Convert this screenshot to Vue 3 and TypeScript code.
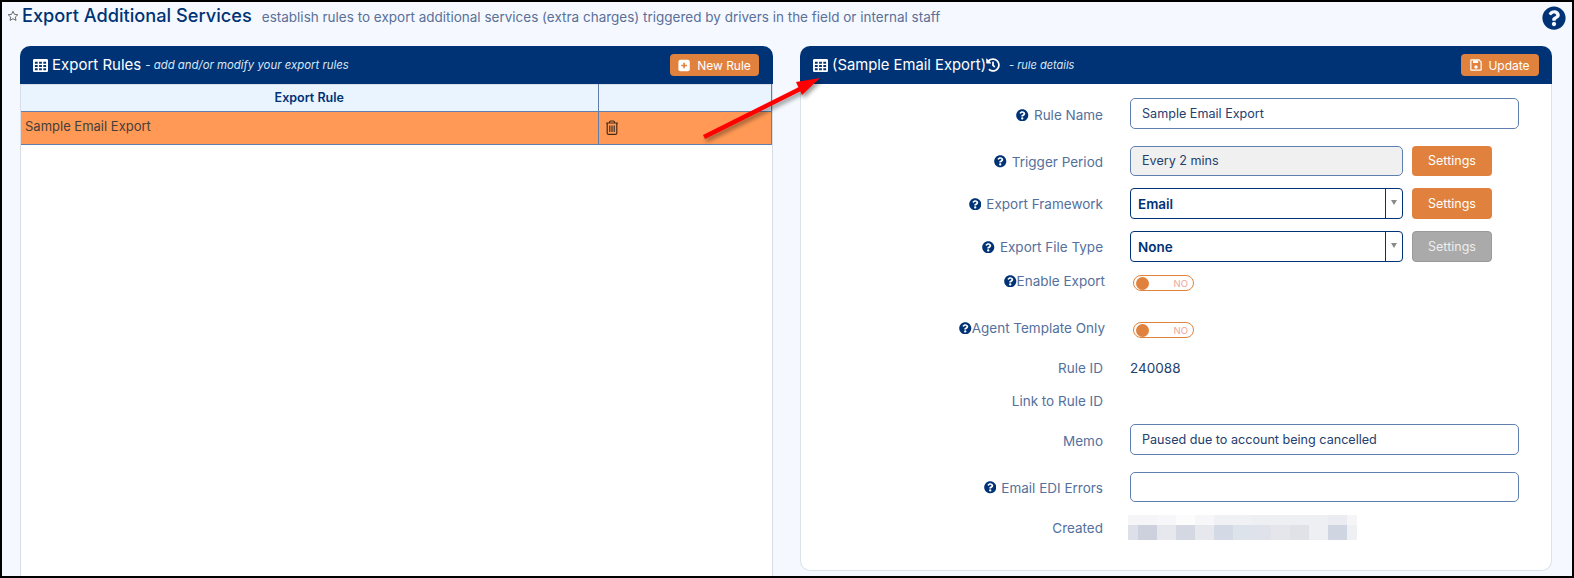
<script setup lang="ts">
const questionPath =
  "M504 256c0 136.997-111.043 248-248 248S8 392.997 8 256C8 119.083 119.043 8 256 8s248 111.083 248 248zM262.655 90c-54.497 0-89.255 22.957-116.549 63.758-3.536 5.286-2.353 12.415 2.715 16.258l34.699 26.31c5.205 3.947 12.621 3.008 16.665-2.122 17.864-22.658 30.113-35.797 57.303-35.797 20.429 0 45.698 13.148 45.698 32.958 0 14.976-12.363 22.667-32.534 33.976C247.128 238.528 216 254.941 216 296v4c0 6.627 5.373 12 12 12h56c6.627 0 12-5.373 12-12v-1.333c0-28.462 83.186-29.647 83.186-106.667 0-58.002-60.165-102-116.531-102zM256 338c-25.365 0-46 20.635-46 46 0 25.364 20.635 46 46 46s46-20.636 46-46c0-25.365-20.635-46-46-46z";
const tablePath =
  "M464 32H48C21.49 32 0 53.49 0 80v352c0 26.51 21.49 48 48 48h416c26.51 0 48-21.49 48-48V80c0-26.51-21.49-48-48-48zM160 416H64v-64h96v64zm0-112H64v-64h96v64zm0-112H64v-64h96v64zm144 224h-96v-64h96v64zm0-112h-96v-64h96v64zm0-112h-96v-64h96v64zm144 224h-96v-64h96v64zm0-112h-96v-64h96v64zm0-112h-96v-64h96v64z";
const historyPath =
  "M504 255.531c.253 136.64-111.18 248.372-247.82 248.468-59.015.042-113.223-20.53-155.822-54.911-11.077-8.94-11.905-25.541-1.839-35.607l11.267-11.267c8.609-8.609 22.353-9.551 31.891-1.984C173.062 425.135 212.781 440 256 440c101.705 0 184-82.311 184-184 0-101.705-82.311-184-184-184-48.814 0-93.149 18.969-126.068 49.932l50.754 50.754c10.08 10.08 2.941 27.314-11.313 27.314H24c-8.837 0-16-7.163-16-16V38.627c0-14.254 17.234-21.393 27.314-11.314l49.372 49.372C129.209 34.136 189.552 8 256 8c136.81 0 247.747 110.78 248 247.531zm-180.912 78.784l9.823-12.63c8.138-10.463 6.253-25.542-4.21-33.679L288 256.349V152c0-13.255-10.745-24-24-24h-16c-13.255 0-24 10.745-24 24v135.651l65.409 50.874c10.463 8.137 25.541 6.253 33.679-4.21z";

// the "Created" value is pixelated in the source, two rows of blocks
interface BlurCell {
  width: number;
  top: string;
  bottom: string;
}

const blurWidths = [10, 19, 19, 19, 19, 19, 19, 19, 19, 19, 19, 19, 10];
const blurTop = [
  "#f5f5f8", "#f5f5f8", "#f7f7fa", "#fcfcfd", "#f7f7fa", "#f0f1f5", "#f0f1f5",
  "#eeeff3", "#eeeff3", "#eeeff3", "#eeeff3", "#eaecf1", "#f5f5f8",
];
const blurBottom = [
  "#dde0e8", "#cdd1dd", "#e6e8ee", "#d3d8e3", "#e6e8ee", "#d3dae5", "#dde3eb",
  "#dfe2ea", "#e4e6ec", "#e0e2e8", "#edeff3", "#d0d6e1", "#eff0f3",
];
const blurCells: BlurCell[] = blurWidths.map((width, i) => ({
  width,
  top: blurTop[i],
  bottom: blurBottom[i],
}));
</script>

<template>
  <div class="page">
    <header class="page-head">
      <svg class="star" viewBox="0 0 24 24">
        <path d="M12 2.5l2.9 6.2 6.7.8-5 4.6 1.4 6.7L12 17.4l-6 3.4 1.4-6.7-5-4.6 6.7-.8z" />
      </svg>
      <h1 class="page-title">Export Additional Services</h1>
      <span class="page-sub">establish rules to export additional services (extra charges) triggered by drivers in the field or internal staff</span>
      <svg class="page-help" viewBox="0 0 512 512">
        <path :d="questionPath" />
      </svg>
    </header>

    <div class="panels">
      <section class="panel panel--rules">
        <div class="panel-head">
          <svg class="head-icon" viewBox="0 0 512 512"><path :d="tablePath" /></svg>
          <span class="panel-title">Export Rules</span>
          <span class="panel-sub">- add and/or modify your export rules</span>
          <button class="head-btn head-btn--new">
            <svg class="btn-icon" viewBox="0 0 16 16">
              <rect x="0.5" y="1" width="14" height="14" rx="2.5" fill="#fff" />
              <path d="M7.5 4.5v7M4 8h7" stroke="#e0823d" stroke-width="2" />
            </svg>
            New Rule
          </button>
        </div>
        <table class="rules">
          <thead>
            <tr>
              <th class="col-name">Export Rule</th>
              <th class="col-action"></th>
            </tr>
          </thead>
          <tbody>
            <tr class="selected">
              <td class="cell-name">Sample Email Export</td>
              <td class="cell-action">
                <svg class="trash" viewBox="0 0 14 15">
                  <path d="M1 3h12M4.5 3V2.2c0-.7.5-1.2 1.2-1.2h2.6c.7 0 1.2.5 1.2 1.2V3M2.2 3v10.2c0 .7.5 1.2 1.2 1.2h7.2c.7 0 1.2-.5 1.2-1.2V3" fill="none" stroke="#4a2a14" stroke-width="1.2" />
                  <path d="M4.8 5.5v6.5M7 5.5v6.5M9.2 5.5v6.5" stroke="#3b3328" stroke-width="1.2" />
                </svg>
              </td>
            </tr>
          </tbody>
        </table>
      </section>

      <section class="panel panel--details">
        <div class="panel-head">
          <svg class="head-icon" viewBox="0 0 512 512"><path :d="tablePath" /></svg>
          <span class="panel-title panel-title--details">(Sample Email Export)</span>
          <svg class="history" viewBox="0 0 512 512"><path :d="historyPath" /></svg>
          <span class="panel-sub panel-sub--details">- rule details</span>
          <button class="head-btn head-btn--update">
            <svg class="btn-icon btn-icon--save" viewBox="0 0 14 14">
              <path d="M1.5 1h9l2.5 2.5v8.8c0 .4-.3.7-.7.7H1.7c-.4 0-.7-.3-.7-.7V1.5c0-.3.2-.5.5-.5z" fill="none" stroke="#fff" stroke-width="1.4" />
              <path d="M3.5 1.5h6v3.2h-6z" fill="#fff" />
              <circle cx="7" cy="9.3" r="2" fill="#fff" />
            </svg>
            Update
          </button>
        </div>

        <div class="form">
          <div class="row row--name">
            <label class="label label--low">
              <svg class="help help--spaced" viewBox="0 0 512 512"><path :d="questionPath" /></svg>
              Rule Name
            </label>
            <div class="input input--full">Sample Email Export</div>
          </div>

          <div class="row row--trigger">
            <label class="label">
              <svg class="help help--spaced" viewBox="0 0 512 512"><path :d="questionPath" /></svg>
              Trigger Period
            </label>
            <div class="input input--short input--readonly">Every 2 mins</div>
            <button class="settings">Settings</button>
          </div>

          <div class="row row--select">
            <label class="label">
              <svg class="help help--spaced" viewBox="0 0 512 512"><path :d="questionPath" /></svg>
              Export Framework
            </label>
            <div class="select">
              <span class="select-value">Email</span>
              <span class="select-arrow"></span>
            </div>
            <button class="settings">Settings</button>
          </div>

          <div class="row row--select row--file">
            <label class="label">
              <svg class="help help--spaced" viewBox="0 0 512 512"><path :d="questionPath" /></svg>
              Export File Type
            </label>
            <div class="select">
              <span class="select-value">None</span>
              <span class="select-arrow"></span>
            </div>
            <button class="settings settings--disabled">Settings</button>
          </div>

          <div class="row row--toggle row--enable">
            <label class="label label--toggle">
              <svg class="help" viewBox="0 0 512 512"><path :d="questionPath" /></svg>
              Enable Export
            </label>
            <div class="toggle">
              <span class="knob"></span>
              <span class="toggle-text">NO</span>
            </div>
          </div>

          <div class="row row--toggle row--agent">
            <label class="label label--toggle">
              <svg class="help" viewBox="0 0 512 512"><path :d="questionPath" /></svg>
              Agent Template Only
            </label>
            <div class="toggle">
              <span class="knob"></span>
              <span class="toggle-text">NO</span>
            </div>
          </div>

          <div class="row row--id">
            <label class="label">Rule ID</label>
            <span class="value">240088</span>
          </div>

          <div class="row row--link">
            <label class="label label--low">Link to Rule ID</label>
          </div>

          <div class="row row--memo">
            <label class="label label--low">Memo</label>
            <div class="input input--full">Paused due to account being cancelled</div>
          </div>

          <div class="row row--edi">
            <label class="label">
              <svg class="help help--spaced" viewBox="0 0 512 512"><path :d="questionPath" /></svg>
              Email EDI Errors
            </label>
            <div class="input input--full"></div>
          </div>

          <div class="row row--created">
            <label class="label">Created</label>
            <div class="blur">
              <div
                v-for="(cell, i) in blurCells"
                :key="i"
                class="blur-col"
                :style="{ width: cell.width + 'px' }"
              >
                <span class="blur-top" :style="{ background: cell.top }"></span>
                <span class="blur-bottom" :style="{ background: cell.bottom }"></span>
              </div>
            </div>
          </div>
        </div>
      </section>
    </div>

    <svg class="arrow" viewBox="0 0 130 70">
      <path d="M4 63 L106 12" stroke="#f00" stroke-width="4.5" stroke-linecap="butt" />
      <polygon points="120,4 96,8 102,21" fill="#f00" />
    </svg>
  </div>
</template>

<style>
html,
body {
  margin: 0;
  overflow: hidden;
}
</style>

<style scoped>
.page {
  position: relative;
  box-sizing: border-box;
  width: 1574px;
  height: 578px;
  border: 2px solid #000;
  background: #f5f9ff;
  overflow: hidden;
  font-family: Inter, "Liberation Sans", sans-serif;
}

.page-head {
  display: flex;
  align-items: flex-start;
  height: 44px;
  padding: 2px 6px 0 5px;
  box-sizing: border-box;
}

.star {
  width: 12px;
  height: 12px;
  margin: 6px 3px 0 0;
  fill: none;
  stroke: #5a5a5a;
  stroke-width: 1.8;
}

.page-title {
  margin: 0;
  font-size: 18.2px;
  font-weight: 500;
  line-height: 22px;
  color: #003375;
}

.page-sub {
  margin: 4px 0 0 10px;
  font-size: 13.5px;
  line-height: 18px;
  color: #5a7099;
}

.page-help {
  width: 24px;
  height: 24px;
  margin: 2px 0 0 auto;
  fill: #003375;
}

.panels {
  display: grid;
  grid-template-columns: 753px 752px;
  column-gap: 27px;
  align-items: start;
  padding-left: 18px;
}

.panel {
  box-sizing: border-box;
  border-radius: 10px 10px 0 0;
  background: #fff;
}

.panel--rules {
  height: 540px;
  border-right: 1px solid #d8dee8;
  border-left: 1px solid #d8dee8;
}

.panel--details {
  height: 525px;
  border: 1px solid #dde2ea;
  border-top: 0;
  border-radius: 10px;
}

.panel-head {
  display: flex;
  align-items: center;
  box-sizing: border-box;
  height: 38px;
  margin: 0 -1px;
  padding: 0 13px;
  border-radius: 10px 10px 0 0;
  background: #003375;
  color: #fff;
}

.head-icon {
  flex: none;
  width: 15px;
  height: 15px;
  margin-right: 4px;
  fill: #fff;
}

.panel-title {
  font-size: 15px;
  line-height: 20px;
}

.panel-title--details {
  font-size: 14.8px;
}

.panel-sub {
  margin-left: 4px;
  font-size: 11.4px;
  font-style: italic;
  color: #d8e6f7;
}

.panel-sub--details {
  margin-left: 9px;
  font-size: 11px;
}

.history {
  flex: none;
  width: 14px;
  height: 14px;
  fill: #fff;
}

.head-btn {
  display: flex;
  align-items: center;
  justify-content: center;
  gap: 6px;
  box-sizing: border-box;
  height: 22px;
  margin-left: auto;
  padding: 0;
  border: 0;
  border-radius: 4px;
  background: #e0823d;
  color: #fff;
  font-family: inherit;
  font-size: 12px;
}

.head-btn--new {
  width: 89px;
  margin-right: 1px;
}

.head-btn--update {
  width: 78px;
}

.btn-icon {
  width: 13px;
  height: 13px;
}

.btn-icon--save {
  width: 12px;
  height: 12px;
}

.rules {
  width: 751px;
  border-collapse: collapse;
  table-layout: fixed;
  font-size: 13px;
}

.rules th {
  height: 27px;
  padding: 0 0 1px;
  box-sizing: border-box;
  border: 1px solid #5f7fae;
  border-top: 1px solid #d8dee8;
  background: #eaf4fe;
  color: #003375;
  font-weight: 600;
  font-size: 12.5px;
}

.rules th:first-child,
.rules td:first-child {
  border-left: 0;
}

.col-name {
  width: 577px;
}

.rules td {
  height: 32px;
  padding: 0 0 0 5px;
  border: 1px solid #5f7fae;
  color: #44403c;
}

.rules .cell-name {
  height: 28px;
  padding-left: 4px;
  padding-bottom: 4px;
}

.selected td {
  background: #ff9955;
}

.rules .cell-action {
  height: 30px;
  padding-left: 6px;
  padding-bottom: 2px;
  line-height: 0;
}

.trash {
  width: 14px;
  height: 15px;
}

.form {
  padding-top: 14px;
}

.row {
  display: flex;
  align-items: center;
}

.row--name {
  height: 31px;
  margin-bottom: 17px;
}

.row--trigger {
  height: 30px;
  margin-bottom: 12px;
}

.row--select {
  height: 31px;
  margin-bottom: 12px;
}

.row--file {
  margin-bottom: 13px;
}

.row--toggle {
  height: 16px;
}

.row--enable {
  margin-bottom: 31px;
}

.row--agent {
  margin-bottom: 19px;
}

.row--id {
  height: 20px;
  margin-bottom: 12px;
}

.row--link {
  height: 20px;
  margin-bottom: 15px;
}

.row--memo {
  height: 31px;
  margin-bottom: 17px;
}

.row--edi {
  height: 30px;
  margin-bottom: 13px;
}

.row--created {
  height: 25px;
}

.label {
  display: flex;
  align-items: center;
  justify-content: flex-end;
  box-sizing: border-box;
  flex: none;
  width: 302px;
  margin-right: 27px;
  padding-top: 1px;
  font-size: 13.5px;
  line-height: 18px;
  color: #54709c;
}

.label--low {
  padding-top: 3px;
}

.label--toggle {
  margin-right: 28px;
  width: 304px;
  padding-top: 0;
  transform: translateY(-2px);
}

.help {
  flex: none;
  width: 12.5px;
  height: 12.5px;
  fill: #003375;
}

.help--spaced {
  margin-right: 5px;
}

.input {
  box-sizing: border-box;
  height: 100%;
  padding: 0 11px;
  border: 1px solid #5f7fae;
  border-radius: 5px;
  font-size: 12.6px;
  line-height: 29px;
  color: #24406e;
  background: #fff;
}

.input--full {
  width: 389px;
}

.input--short {
  width: 273px;
}

.input--readonly {
  background: #f0f0f0;
  line-height: 27px;
}

.select {
  display: flex;
  box-sizing: border-box;
  width: 273px;
  height: 100%;
  border: 1px solid #003375;
  border-radius: 4px;
}

.select-value {
  flex: 1;
  padding-left: 7px;
  font-size: 13.5px;
  font-weight: 600;
  line-height: 30px;
  color: #003375;
}

.select-arrow {
  position: relative;
  box-sizing: border-box;
  width: 17px;
  border-left: 1px solid #003375;
}

.select-arrow::after {
  content: "";
  position: absolute;
  top: 11px;
  left: 5px;
  border-top: 5px solid #8a8a8a;
  border-right: 3px solid transparent;
  border-left: 3px solid transparent;
}

.settings {
  box-sizing: border-box;
  width: 80px;
  height: 100%;
  margin-left: 9px;
  padding: 0 0 1px;
  border: 0;
  border-radius: 4px;
  background: #e0823d;
  color: #fff;
  font-family: inherit;
  font-size: 12.5px;
}

.settings--disabled {
  border: 1px solid #999;
  background: #aaa;
  color: #eee;
}

.toggle {
  display: flex;
  align-items: center;
  justify-content: space-between;
  box-sizing: border-box;
  width: 61px;
  height: 16px;
  padding: 0 5px 0 1px;
  border: 1px solid #e0823d;
  border-radius: 8px;
  background: #fff;
}

.knob {
  width: 13px;
  height: 13px;
  margin-left: 1px;
  border-radius: 50%;
  background: #e0823d;
}

.toggle-text {
  font-size: 9.5px;
  line-height: 10px;
  color: #eda49b;
  transform: translateY(1px);
}

.value {
  font-size: 13.5px;
  color: #24406e;
  transform: translateY(1px);
}

.blur {
  display: flex;
  height: 25px;
  margin-left: -2px;
}

.blur-col {
  display: flex;
  flex-direction: column;
}

.blur-top {
  height: 10px;
}

.blur-bottom {
  height: 15px;
}

.arrow {
  position: absolute;
  top: 72px;
  left: 698px;
  width: 130px;
  height: 70px;
  filter: drop-shadow(2px 3px 2px rgba(0, 0, 0, 0.4));
}
</style>
